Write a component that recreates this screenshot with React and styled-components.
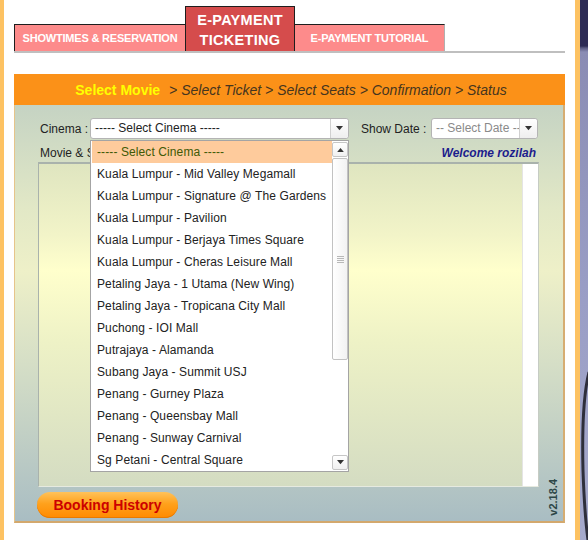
import React from "react";
import styled, { createGlobalStyle } from "styled-components";

const cinemas = [
  "----- Select Cinema -----",
  "Kuala Lumpur - Mid Valley Megamall",
  "Kuala Lumpur - Signature @ The Gardens",
  "Kuala Lumpur - Pavilion",
  "Kuala Lumpur - Berjaya Times Square",
  "Kuala Lumpur - Cheras Leisure Mall",
  "Petaling Jaya - 1 Utama (New Wing)",
  "Petaling Jaya - Tropicana City Mall",
  "Puchong - IOI Mall",
  "Putrajaya - Alamanda",
  "Subang Jaya - Summit USJ",
  "Penang - Gurney Plaza",
  "Penang - Queensbay Mall",
  "Penang - Sunway Carnival",
  "Sg Petani - Central Square",
];

const tabs = [
  { label: "SHOWTIMES & RESERVATION", width: 171 },
  { label: ["E-PAYMENT", "TICKETING"], width: 110, active: true },
  { label: "E-PAYMENT TUTORIAL", width: 150 },
];

const GlobalStyle = createGlobalStyle`
  *, *::before, *::after { box-sizing: border-box; }
  html, body { margin: 0; padding: 0; }
  body {
    background: #2d2b55;
    font-family: "Liberation Sans", Arial, sans-serif;
    overflow: hidden;
  }
`;

const Caret = ({ size = 7 }) => (
  <svg width={size} height={size * 0.6} viewBox="0 0 10 6">
    <path d="M0 0 L10 0 L5 6 Z" fill="#333" />
  </svg>
);

const UpCaret = () => (
  <svg width="7" height="4" viewBox="0 0 10 6">
    <path d="M0 6 L10 6 L5 0 Z" fill="#333" />
  </svg>
);

const App = () => {
  return (
    <Frame>
      <GlobalStyle />
      <Page>
        <TabBar>
          {tabs.map((t, i) => (
            <Tab key={i} $active={t.active} $first={i === 0} style={{ width: t.width }}>
              {Array.isArray(t.label) ? (
                <ActiveLabel>
                  {t.label.map((l) => (
                    <span key={l}>{l}</span>
                  ))}
                </ActiveLabel>
              ) : (
                <TabLabel>{t.label}</TabLabel>
              )}
            </Tab>
          ))}
        </TabBar>

        <StepBar>
          <CurrentStep>Select Movie</CurrentStep>
          <NextSteps>&gt; Select Ticket &gt; Select Seats &gt; Confirmation &gt; Status</NextSteps>
        </StepBar>

        <Panel>
          <FilterRow>
            <Label $width={52}>Cinema :</Label>
            <Select $width={259}>
              <SelectText>----- Select Cinema -----</SelectText>
              <SelectButton>
                <Caret />
              </SelectButton>
              <DropList>
                <Options>
                  {cinemas.map((c, i) => (
                    <Option key={c} $selected={i === 0}>
                      {c}
                    </Option>
                  ))}
                </Options>
                <ScrollBar>
                  <ScrollButton>
                    <UpCaret />
                  </ScrollButton>
                  <Thumb>
                    <Grip />
                  </Thumb>
                  <ScrollSpacer />
                  <ScrollButton>
                    <Caret />
                  </ScrollButton>
                </ScrollBar>
              </DropList>
            </Select>
            <Label $width={72} $gap={10}>
              Show Date :
            </Label>
            <Select $width={107}>
              <SelectText $muted>-- Select Date --</SelectText>
              <SelectButton>
                <Caret />
              </SelectButton>
            </Select>
          </FilterRow>

          <InfoRow>
            <Label>Movie &amp; Showtime :</Label>
            <Welcome>Welcome rozilah</Welcome>
          </InfoRow>

          <ContentBox>
            <ContentArea />
            <ContentScroll />
          </ContentBox>

          <BottomRow>
            <HistoryButton>Booking History</HistoryButton>
            <Version>v2.18.4</Version>
          </BottomRow>
        </Panel>
      </Page>
      <Backdrop>
        <svg width="8" height="540" viewBox="0 0 8 540">
          <path d="M9 372 C4 392 2 430 3 470 C4 500 6 525 8 540" stroke="#1a1a22" strokeWidth="3" fill="none" opacity="0.85" />
        </svg>
      </Backdrop>
    </Frame>
  );
};

export default App;

const Frame = styled.div`
  display: flex;
  width: 588px;
  height: 540px;
`;

const Page = styled.div`
  flex: none;
  width: 580px;
  height: 540px;
  background: #fff;
  border-left: 4px solid #fdc262;
  border-right: 5px solid #fdc262;
  padding: 6px 10px 0;
`;

const Backdrop = styled.div`
  flex: 1;
  background: linear-gradient(
    to bottom,
    #2d2b55 0,
    #2d2b55 46px,
    #5c5c84 48px,
    #8a8cb4 52px,
    #9a9ec6 300px,
    #a6aacc 540px
  );
`;

const TabBar = styled.div`
  display: flex;
  align-items: flex-end;
  height: 47px;
  border-bottom: 2px solid #bfbfbf;
`;

const Tab = styled.div`
  display: flex;
  align-items: center;
  justify-content: center;
  height: ${(p) => (p.$active ? "45px" : "27px")};
  background: ${(p) => (p.$active ? "#d54c4c" : "#fd8b8b")};
  border-top: 1px solid #1e1e1e;
  border-left: ${(p) => (p.$first || p.$active ? "1px solid #1e1e1e" : "none")};
  border-right: ${(p) => (p.$active ? "1px solid #1e1e1e" : p.$first ? "none" : "1px solid #b0b0b0")};
  color: #fff;
  font-weight: bold;
`;

const TabLabel = styled.span`
  font-size: 11px;
  letter-spacing: -0.2px;
  white-space: nowrap;
`;

const ActiveLabel = styled.div`
  display: flex;
  flex-direction: column;
  align-items: center;
  font-size: 14.5px;
  line-height: 20px;
  letter-spacing: 0.3px;
  margin-top: 1px;
`;

const StepBar = styled.div`
  display: flex;
  align-items: center;
  justify-content: center;
  height: 31px;
  margin-top: 21px;
  padding-left: 3px;
  background: #fb9118;
  font-size: 14px;
`;

const CurrentStep = styled.span`
  color: #ffff00;
  font-weight: bold;
  margin-right: 9px;
`;

const NextSteps = styled.span`
  color: #45351f;
  font-style: italic;
`;

const Panel = styled.div`
  position: relative;
  height: 418px;
  padding: 13px 24px 0 23px;
  background: linear-gradient(
    to bottom,
    #c5d3c3 0%,
    #e2e8c6 25%,
    #eef0c8 40%,
    #d2dcc6 65%,
    #a9bdc3 100%
  );
  border-left: 1px solid #e6c48a;
  border-right: 2px solid #d6ad72;
  border-bottom: 2px solid #d3a86d;
  font-size: 12px;
  color: #222;
`;

const FilterRow = styled.div`
  display: flex;
  align-items: center;
  height: 21px;
`;

const Label = styled.span`
  flex: none;
  width: ${(p) => (p.$width ? `${p.$width}px` : "auto")};
  margin-left: ${(p) => (p.$gap ? `${p.$gap}px` : "0")};
  padding-left: 2px;
  white-space: nowrap;
  font-size: 12px;
  color: #222;
`;

const Select = styled.div`
  position: relative;
  flex: none;
  display: flex;
  width: ${(p) => p.$width}px;
  height: 21px;
  background: #fff;
  border: 1px solid #b4b4b4;
  border-radius: 3px;
`;

const SelectText = styled.div`
  flex: 1;
  overflow: hidden;
  white-space: nowrap;
  padding-left: 4px;
  line-height: 19px;
  color: ${(p) => (p.$muted ? "#8a8a8a" : "#222")};
`;

const SelectButton = styled.div`
  flex: none;
  display: flex;
  align-items: center;
  justify-content: center;
  width: 18px;
  border-left: 1px solid #d0d0d0;
  border-radius: 0 3px 3px 0;
  background: linear-gradient(#ffffff, #eeeeee);
`;

const DropList = styled.div`
  position: absolute;
  top: 21px;
  left: -1px;
  z-index: 5;
  display: flex;
  width: 259px;
  height: 332px;
  padding-left: 1px;
  background: #fff;
  border: 1px solid #a4a4a4;
`;

const Options = styled.div`
  flex: 1;
  display: flex;
  flex-direction: column;
`;

const Option = styled.div`
  height: 22px;
  line-height: 22px;
  padding-left: 5px;
  white-space: nowrap;
  overflow: hidden;
  letter-spacing: 0.1px;
  background: ${(p) => (p.$selected ? "#fecb9c" : "transparent")};
  color: ${(p) => (p.$selected ? "#405a06" : "#222")};
`;

const ScrollBar = styled.div`
  flex: none;
  display: flex;
  flex-direction: column;
  width: 16px;
  padding: 1px 0;
  background: #fff;
`;

const ScrollButton = styled.div`
  display: flex;
  align-items: center;
  justify-content: center;
  height: 15px;
  border: 1px solid #c6c6c6;
  border-radius: 2px;
  background: linear-gradient(#ffffff, #f0f0f0);
`;

const Thumb = styled.div`
  display: flex;
  align-items: center;
  justify-content: center;
  height: 202px;
  margin-top: 1px;
  border: 1px solid #c2c2c2;
  border-radius: 2px;
  background: linear-gradient(to right, #ffffff, #f2f2f2);
`;

const Grip = styled.div`
  width: 7px;
  height: 7px;
  background: repeating-linear-gradient(#b8b8b8 0, #b8b8b8 1px, transparent 1px, transparent 2px);
`;

const ScrollSpacer = styled.div`
  flex: 1;
`;

const InfoRow = styled.div`
  display: flex;
  align-items: center;
  justify-content: space-between;
  height: 16px;
  margin-top: 6px;
`;

const Welcome = styled.span`
  margin-right: 3px;
  color: #1c1c8c;
  font-weight: bold;
  font-style: italic;
  font-size: 12px;
`;

const ContentBox = styled.div`
  display: flex;
  height: 325px;
  margin-top: 1px;
  border-top: 2px solid #a9b2ac;
  border-left: 1px solid #a9b2ac;
  border-right: 1px solid #c6ccc4;
  border-bottom: 1px solid #e6eae0;
`;

const ContentArea = styled.div`
  flex: 1;
  background: linear-gradient(
    to bottom,
    #dfe5c0 0%,
    #f2f4c8 22%,
    #ffffcc 33%,
    #eef2c6 55%,
    #d4dcc2 100%
  );
`;

const ContentScroll = styled.div`
  flex: none;
  width: 16px;
  background: #fff;
  border-left: 1px solid #e4e4e4;
`;

const BottomRow = styled.div`
  display: flex;
  align-items: flex-start;
  justify-content: space-between;
  height: 36px;
`;

const HistoryButton = styled.div`
  display: flex;
  align-items: center;
  justify-content: center;
  width: 141px;
  height: 26px;
  margin-top: 5px;
  margin-left: -1px;
  border-radius: 13px;
  background: linear-gradient(#ffc25a 0%, #ffa11c 45%, #ff8a00 100%);
  box-shadow: inset 0 -1px 0 #e87a00;
  color: #cc0000;
  font-weight: bold;
  font-size: 14px;
`;

const Version = styled.span`
  margin-top: -8px;
  margin-right: -20px;
  writing-mode: vertical-rl;
  transform: rotate(180deg);
  color: #2c4646;
  font-weight: bold;
  font-size: 11px;
`;
